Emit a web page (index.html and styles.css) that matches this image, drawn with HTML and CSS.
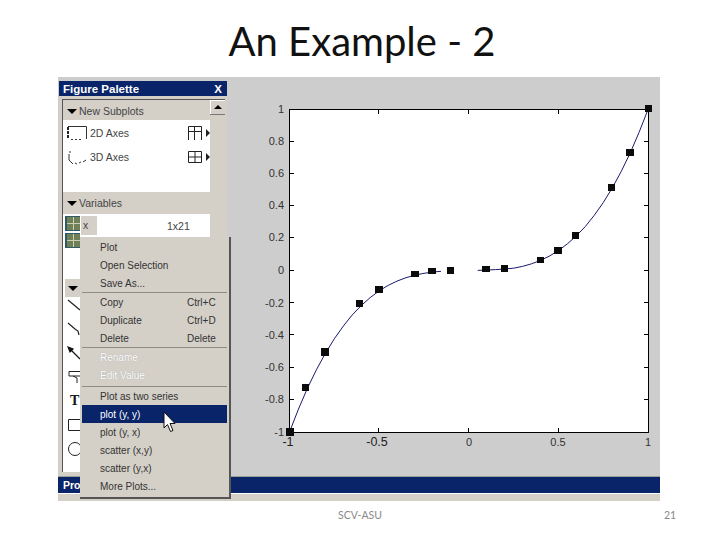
FILE: index.html
```html
<!DOCTYPE html>
<html lang="en">
  <head>
    <meta charset="UTF-8" />
    <title>An Example - 2</title>
    <link rel="stylesheet" href="styles.css">
  </head>
  <body>
    <div class="slide">
      <h1 class="slide-title">An Example - 2</h1>

      <div class="screen">
        <div class="main">
          <!-- Figure palette -->
          <div class="palette">
            <div class="palette-title"><span>Figure Palette</span><span class="close">X</span></div>
            <div class="palette-body">
              <div class="palette-content">
                <div class="section-head"><i class="tri"></i>New Subplots</div>
                <div class="subplots">
                  <div class="subplot-row">
                    <svg class="axes-icon" width="22" height="16" viewBox="0 0 22 16"><path d="M2 2V14" fill="none" stroke="#222" stroke-width="2" stroke-dasharray="3 1" /><path d="M2 1.500H20.500V14M5 14.500h2M9 14.500h2M13 14.500h2" fill="none" stroke="#333" /></svg>
                    <span class="subplot-name">2D Axes</span>
                    <svg class="grid-icon" width="14" height="14" viewBox="0 0 14 14"><path d="M.5 14V.5H13.500V14M6.500 .5V14M.5 5.500H13.500" fill="none" stroke="#222" /></svg>
                    <i class="arrow"></i>
                  </div>
                  <div class="subplot-row">
                    <svg class="axes-icon" width="22" height="16" viewBox="0 0 22 16"><path d="M3 3h2M3 5v6M3 11l4 4M9 14l2 1M13 14l2-1M17 13l3-2" fill="none" stroke="#333" /></svg>
                    <span class="subplot-name">3D Axes</span>
                    <svg class="grid-icon" width="14" height="12" viewBox="0 0 14 12"><path d="M.5 .5H13.500V11.500H.5ZM7 .5V11.500M.5 6H13.500" fill="none" stroke="#222" /></svg>
                    <i class="arrow"></i>
                  </div>
                </div>
                <div class="section-head section-vars"><i class="tri"></i>Variables</div>
                <div class="variables">
                  <div class="var-row">
                    <i class="var-icon"></i><span class="var-name">x</span><span class="var-size">1x21</span>
                  </div>
                  <div class="var-row"><i class="var-icon"></i><span class="var-name blank"></span></div>
                </div>
                <div class="annot-head"><i class="tri"></i></div>
                <div class="tools">
                  <svg width="14" height="14" viewBox="0 0 14 14"><path d="M1 2L13 12" stroke="#222" stroke-width="1.2" /></svg>
                  <svg width="14" height="14" viewBox="0 0 14 14"><path d="M1 1L8 7L11 9L12 13" fill="none" stroke="#222" stroke-width="1.200" /></svg>
                  <svg width="14" height="14" viewBox="0 0 14 14"><path d="M1 1L6 3L3 6ZM4 4L13 13" fill="#111" stroke="#111" stroke-width="1.200" /></svg>
                  <svg width="14" height="14" viewBox="0 0 14 14"><path d="M14 1.500H2V6H14M6 6L10 8L10 13" fill="none" stroke="#222" /></svg>
                  <span class="tool-text">T</span>
                  <svg width="14" height="14" viewBox="0 0 14 14"><path d="M14 1.500H1.500V12.500H14" fill="none" stroke="#222" /></svg>
                  <svg width="14" height="14" viewBox="0 0 14 14"><circle cx="8" cy="7" r="6.500" fill="none" stroke="#222" /></svg>
                </div>
              </div>
              <div class="scrollbar"><div class="scroll-btn"><i class="tri-up"></i></div></div>
            </div>
          </div>

          <!-- Plot: viewBox uses slide pixels -->
          <svg class="plot" width="433" height="399" viewBox="227 77 433 399">
            <rect x="289.5" y="109.5" width="359" height="323" fill="#fff" stroke="#000" />
            <path d="M378.5 110V114M468.5 110V114M558.5 110V114M378.5 432V428M468.5 432V428M558.5 432V428" stroke="#000" />
            <path d="M290 141.5h4M290 173.5h4M290 205.5h4M290 237.5h4M290 270.5h4M290 302.5h4M290 334.5h4M290 367.5h4M290 399.5h4" stroke="#000" />
            <path d="M648 141.5h-4M648 173.5h-4M648 205.5h-4M648 237.5h-4M648 270.5h-4M648 302.5h-4M648 334.5h-4M648 367.5h-4M648 399.5h-4" stroke="#000" />

            <polyline class="curve" points="289.5,432 298.5,409 307.4,388.3 316.4,369.8 325.4,353.3 334.3,338.8 343.3,326.1 352.2,315 361.2,305.6 370.2,297.6 379.1,290.9 388.1,285.4 397,281.1 406,277.7 415,275.1 424,273.3 433,272 441,271.3" />
            <polyline class="curve" points="477.7,270.4 486.7,270 495.6,269.6 504.6,269 513.5,268.2 522.5,266.4 531.5,263.8 540.5,260.4 549.4,256.1 558.4,250.6 567.3,243.9 576.3,235.9 585.3,226.5 594.2,215.4 603.2,202.7 612.1,188.2 621.1,171.7 630.1,153.2 639,132.5 648,109.5" />

            <g class="markers">
              <rect x="286" y="428" width="8" height="8" />
              <rect x="302" y="384" width="7" height="7" />
              <rect x="321" y="348" width="8" height="8" />
              <rect x="356" y="300" width="7" height="7" />
              <rect x="375" y="286" width="8" height="7" />
              <rect x="411" y="271" width="8" height="6" />
              <rect x="428" y="268" width="8" height="6" />
              <rect x="447" y="267" width="7" height="7" />
              <rect x="482" y="266" width="8" height="6" />
              <rect x="501" y="265" width="7" height="7" />
              <rect x="537" y="257" width="7" height="6" />
              <rect x="554" y="247" width="8" height="7" />
              <rect x="572" y="232" width="7" height="7" />
              <rect x="608" y="184" width="7" height="7" />
              <rect x="626" y="149" width="8" height="7" />
              <rect x="645" y="105" width="7" height="7" />
            </g>

            <g class="y-labels">
              <text x="284" y="113">1</text>
              <text x="284" y="145">0.8</text>
              <text x="284" y="177">0.6</text>
              <text x="284" y="209">0.4</text>
              <text x="284" y="241">0.2</text>
              <text x="284" y="274">0</text>
              <text x="284" y="307">-0.2</text>
              <text x="284" y="339">-0.4</text>
              <text x="284" y="371">-0.6</text>
              <text x="284" y="403">-0.8</text>
              <text x="284" y="436">-1</text>
            </g>
            <g class="x-labels">
              <text class="big" x="288" y="446">-1</text>
              <text class="big" x="377" y="446">-0.5</text>
              <text x="469" y="446">0</text>
              <text x="558" y="446">0.5</text>
              <text x="648" y="446">1</text>
            </g>
          </svg>
        </div>

        <div class="status"><div class="status-bar">Pro</div></div>

        <!-- Context menu over the palette -->
        <div class="menu">
          <div class="menu-item">Plot</div>
          <div class="menu-item">Open Selection</div>
          <div class="menu-item">Save As...</div>
          <div class="menu-sep"></div>
          <div class="menu-item">Copy<span class="shortcut">Ctrl+C</span></div>
          <div class="menu-item">Duplicate<span class="shortcut">Ctrl+D</span></div>
          <div class="menu-item">Delete<span class="shortcut">Delete</span></div>
          <div class="menu-sep"></div>
          <div class="menu-item disabled">Rename</div>
          <div class="menu-item disabled">Edit Value</div>
          <div class="menu-sep wide"></div>
          <div class="menu-item">Plot as two series</div>
          <div class="menu-item selected">plot (y, y)</div>
          <div class="menu-item">plot (y, x)</div>
          <div class="menu-item">scatter (x,y)</div>
          <div class="menu-item">scatter (y,x)</div>
          <div class="menu-item">More Plots...</div>
        </div>

        <svg class="cursor" width="13" height="22" viewBox="0 0 13 22">
          <path d="M1 1V17L4.500 13.500L7.500 20.500L10 19.500L7 12.500H12Z" fill="#fff" stroke="#111" />
        </svg>
      </div>

      <div class="slide-footer">
        <span class="footer-center">SCV-ASU</span>
        <span class="footer-page">21</span>
      </div>
    </div>
  </body>
</html>
```

FILE: styles.css
```css
body {
  margin: 0;
  background-color: #fff;
  font-family: "Liberation Sans", Arial, sans-serif;
}

.slide {
  width: 720px;
  height: 540px;
  overflow: hidden;
}

.slide-title {
  margin: 0;
  height: 77px;
  padding-left: 4px;
  box-sizing: border-box;
  font-family: Lato, "Liberation Sans", sans-serif;
  font-size: 40px;
  font-weight: 400;
  line-height: 82px;
  text-align: center;
  color: #111;
}

/* Screenshot */
.screen {
  position: relative;
  width: 602px;
  height: 424px;
  margin-left: 58px;
  background-color: #cdcdcd;
}

.main {
  display: flex;
  height: 399px;
}

.palette {
  display: flex;
  flex-direction: column;
  width: 168px;
  margin: 4px 0 0 1px;
  background-color: #d4d0c8;
  font-size: 10.5px;
  color: #444;
}

.palette-title {
  display: flex;
  justify-content: space-between;
  align-items: center;
  flex: none;
  height: 15px;
  padding: 0 5px 0 4px;
  background-color: #0a246a;
  color: #fff;
  font-size: 11.5px;
  font-weight: bold;
}

.palette-body {
  display: flex;
  flex: 1;
  margin: 3px 2px 4px 3px;
  border: 1px solid #555;
  border-right: none;
  border-bottom: none;
}

.palette-content {
  display: flex;
  flex-direction: column;
  width: 147px;
  background-color: #fff;
}

.section-head {
  display: flex;
  align-items: center;
  gap: 2px;
  flex: none;
  height: 20px;
  padding: 2px 0 0 4px;
  box-sizing: border-box;
  background-color: #d4d0c8;
}

.section-vars {
  height: 22px;
  padding: 0 0 0 4px;
}

.tri {
  width: 0;
  height: 0;
  border-left: 5px solid transparent;
  border-right: 5px solid transparent;
  border-top: 5px solid #000;
}

.subplots {
  flex: none;
  height: 72px;
  padding-top: 1px;
  box-sizing: border-box;
}

.subplot-row {
  display: flex;
  align-items: center;
  height: 24px;
  padding-left: 3px;
}

.axes-icon {
  flex: none;
}

.subplot-name {
  margin-left: 2px;
  width: 98px;
}

.grid-icon {
  flex: none;
}

.arrow {
  margin-left: 4px;
  border-top: 4px solid transparent;
  border-bottom: 4px solid transparent;
  border-left: 4px solid #222;
}

.variables {
  flex: none;
  height: 63px;
  padding-top: 2px;
  box-sizing: border-box;
}

.var-row {
  display: flex;
  align-items: flex-start;
  height: 17px;
  padding-left: 2px;
}

.var-icon {
  flex: none;
  width: 15px;
  height: 15px;
  border: 1px solid #2f5a6a;
  border-width: 1px 0 1px 2px;
  box-sizing: border-box;
  background-color: #6f7f58;
  background-image: linear-gradient(#c8d0b0, #c8d0b0), linear-gradient(#c8d0b0, #c8d0b0);
  background-size: 100% 1px, 1px 100%;
  background-position: 0 50%, 50% 0;
  background-repeat: no-repeat;
}

.var-name {
  width: 16px;
  height: 19px;
  margin-left: 1px;
  padding-left: 2px;
  box-sizing: border-box;
  line-height: 19px;
  background-color: #d4d0c8;
}

.var-name.blank {
  margin-top: 4px;
}

.var-size {
  margin-top: 4px;
  margin-left: 70px;
}

.annot-head {
  display: flex;
  align-items: center;
  justify-content: center;
  flex: none;
  width: 15px;
  height: 18px;
  margin: 2px 0 0 2px;
  background-color: #d4d0c8;
}

.tools {
  display: flex;
  flex-direction: column;
  gap: 10px;
  padding: 1px 0 0 4px;
}

.tools svg {
  display: block;
}

.tool-text {
  height: 14px;
  padding-left: 3px;
  font-family: "Liberation Serif", serif;
  font-size: 14px;
  font-weight: bold;
  line-height: 14px;
  color: #111;
}

.scrollbar {
  flex: 1;
  background-color: #d4d0c8;
}

.scroll-btn {
  display: flex;
  align-items: center;
  justify-content: center;
  height: 14px;
  border-bottom: 1px solid #777;
  box-shadow: inset 1px 1px 0 #fff;
}

.tri-up {
  border-left: 4px solid transparent;
  border-right: 4px solid transparent;
  border-bottom: 4px solid #000;
}

/* Plot */
.plot {
  display: block;
  flex: none;
  font-size: 11px;
  fill: #333;
}

.curve {
  fill: none;
  stroke: #1a1a6e;
  stroke-width: 1;
}

.markers {
  fill: #0b0b0b;
}

.y-labels {
  text-anchor: end;
}

.x-labels {
  text-anchor: middle;
}

.x-labels .big {
  font-size: 12.5px;
  fill: #222;
}

/* Status strip */
.status {
  height: 25px;
  box-sizing: border-box;
  border-top: 1px solid #98a098;
  background-color: #d4d0c8;
}

.status-bar {
  height: 16px;
  padding-left: 5px;
  background-color: #0a246a;
  border-bottom: 1px solid #fff;
  color: #fff;
  font-size: 10.5px;
  font-weight: bold;
  line-height: 16px;
}

/* Context menu */
.menu {
  position: absolute;
  left: 22px;
  top: 160px;
  width: 145px;
  padding: 1px 2px 2px 2px;
  background-color: #d4d0c8;
  border-right: 2px solid #555;
  border-bottom: 2px solid #555;
  font-size: 10px;
  color: #333;
}

.menu-item {
  display: flex;
  align-items: center;
  height: 18px;
  padding-left: 18px;
}

.shortcut {
  position: absolute;
  left: 107px;
}

.menu-sep {
  height: 1px;
  background-color: #8f8c85;
}

.menu-sep.wide {
  margin: 2px 0 0;
}

.menu-item.disabled {
  color: #fff;
  text-shadow: 0 0 1px #999;
}

.menu-item.selected {
  background-color: #0a246a;
  color: #fff;
}

.cursor {
  position: absolute;
  left: 105px;
  top: 334px;
}

/* Footer */
.slide-footer {
  display: flex;
  align-items: center;
  height: 26px;
  padding-top: 1px;
  box-sizing: border-box;
  font-family: Lato, "Liberation Sans", sans-serif;
  font-size: 10.5px;
  color: #898989;
}

.footer-center {
  margin-left: 338px;
  width: 326px;
}

.footer-page {
  width: 14px;
}
```
